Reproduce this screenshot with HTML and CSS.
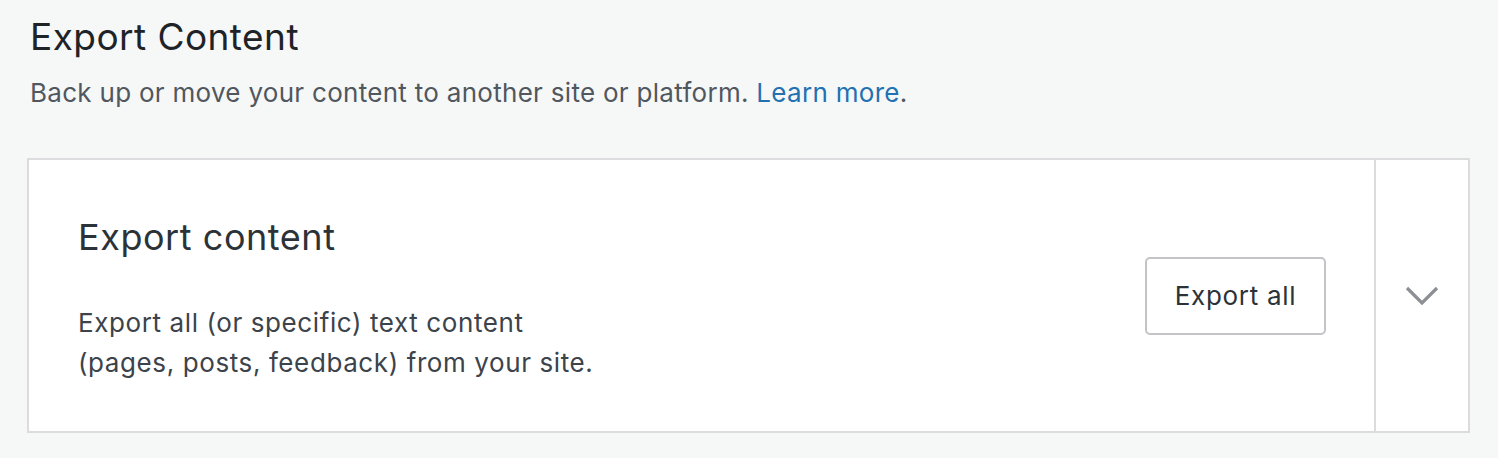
FILE: index.html
```html
<!DOCTYPE html>
<html lang="en">
<head>
<meta charset="utf-8">
<title>Export Content</title>
<link rel="stylesheet" href="styles.css">
</head>
<body>
<main class="page">
  <header class="page-header">
    <h1 class="page-title">Export Content</h1>
    <p class="page-sub">Back up or move your content to another site or platform. <a class="link" href="#">Learn more</a>.</p>
  </header>
  <section class="card">
    <div class="card-main">
      <div class="card-text">
        <h2 class="card-title">Export content</h2>
        <p class="card-desc">Export all (or specific) text content<br>(pages, posts, feedback) from your site.</p>
      </div>
      <button class="btn" type="button">Export all</button>
    </div>
    <div class="card-toggle">
      <svg class="chevron" width="34" height="20" viewBox="0 0 34 20" aria-hidden="true">
        <path d="M2 2 L17 17 L32 2" fill="none" stroke="#8c8f94" stroke-width="3.2"/>
      </svg>
    </div>
  </section>
</main>
</body>
</html>
```
FILE: styles.css
```css
html, body {
  margin: 0;
  padding: 0;
  background: #f6f7f7;
}
body {
  font-family: Inter, "Noto Sans", "Liberation Sans", sans-serif;
  -webkit-font-smoothing: antialiased;
}
.page {
  padding: 15px 28px 0 27px;
}
.page-header {
  padding-left: 3px;
}
.page-title {
  margin: 0;
  font-size: 37px;
  line-height: 44px;
  font-weight: 400;
  color: #1d2327;
  letter-spacing: 0.45px;
}
.page-sub {
  margin: 14px 0 0;
  font-size: 26px;
  line-height: 40px;
  color: #50575e;
  letter-spacing: 0.29px;
}
.link {
  color: #2271b1;
  text-decoration: none;
}
.card {
  margin-top: 45px;
  display: flex;
  background: #fff;
  border: 2px solid #dcdcde;
  height: 271px;
}
.card-main {
  flex: 1;
  display: flex;
  align-items: center;
  justify-content: space-between;
  padding: 0 48px 0 49px;
  border-right: 2px solid #dcdcde;
}
.card-title {
  margin: 0;
  font-size: 36px;
  line-height: 56px;
  font-weight: 400;
  color: #2c3338;
  letter-spacing: 0.55px;
}
.card-desc {
  margin: 38px 0 0;
  font-size: 26px;
  line-height: 40px;
  color: #3c434a;
  letter-spacing: 0.6px;
}
.btn {
  width: 181px;
  height: 78px;
  background: #fff;
  border: 2px solid #c3c4c7;
  border-radius: 5px;
  font-family: inherit;
  font-size: 26px;
  color: #2c3338;
  letter-spacing: 0.7px;
  padding: 0;
}
.card-toggle {
  width: 92px;
  display: flex;
  align-items: center;
  justify-content: center;
}
.chevron {
  display: block;
}
```
